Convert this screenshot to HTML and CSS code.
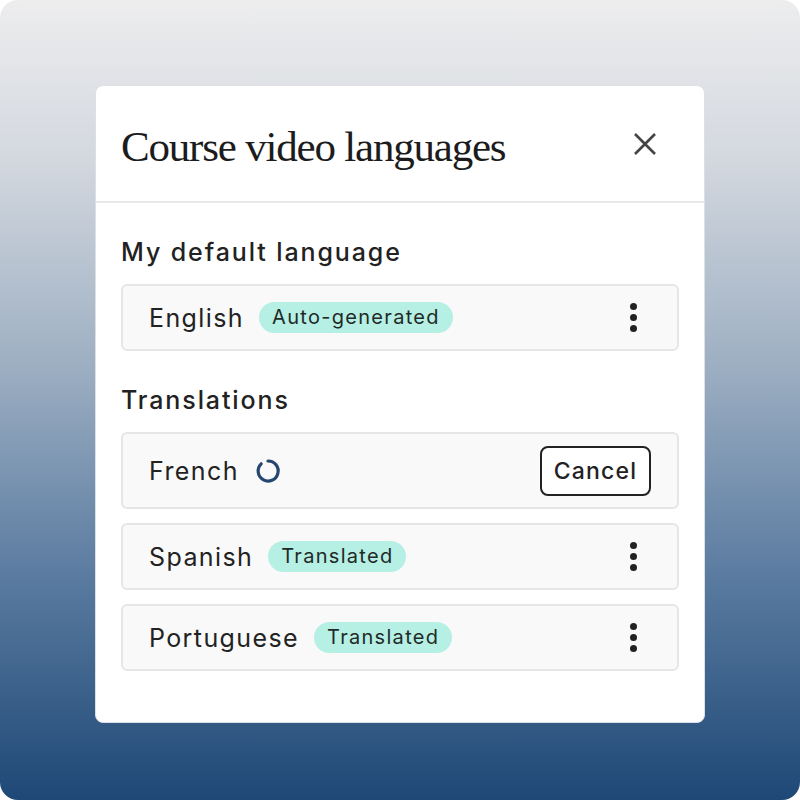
FILE: index.html
```html
<!DOCTYPE html>
<html>
<head>
    <meta charset="UTF-8" />
    <title>Course video languages</title>
    <link rel="stylesheet" href="styles.css">
</head>
<body>
<div class="stage">
    <div class="card">
        <div class="head">
            <h1>Course video languages</h1>
            <button class="close" aria-label="Close">
                <svg width="24" height="24" viewBox="0 0 24 24"><path d="M2 2 L22 22 M22 2 L2 22" stroke="#444" stroke-width="2.6" fill="none"/></svg>
            </button>
        </div>
        <div class="content">
            <h2>My default language</h2>
            <div class="row">
                <span class="lang">English</span>
                <span class="tag">Auto-generated</span>
                <span class="more"><i></i><i></i><i></i></span>
            </div>

            <h2 class="second">Translations</h2>
            <div class="row tall">
                <span class="lang">French</span>
                <svg class="spin" width="28" height="28" viewBox="0 0 28 28"><path d="M7.2 6.8 A10 10 0 1 0 14 4" stroke="#24466f" stroke-width="3.2" fill="none" stroke-linecap="round"/></svg>
                <button class="cancel">Cancel</button>
            </div>
            <div class="row">
                <span class="lang">Spanish</span>
                <span class="tag">Translated</span>
                <span class="more"><i></i><i></i><i></i></span>
            </div>
            <div class="row">
                <span class="lang">Portuguese</span>
                <span class="tag">Translated</span>
                <span class="more"><i></i><i></i><i></i></span>
            </div>
        </div>
    </div>
</div>
</body>
</html>
```

FILE: styles.css
```css
body {
    margin: 0;
    background: #fff;
}

.stage {
    width: 800px;
    height: 800px;
    box-sizing: border-box;
    border-radius: 18px;
    padding: 85px 95px 0 95px;
    background: linear-gradient(180deg, #ededee 0%, #d3d8df 20%, #9fb0c3 45%, #5f7fa3 70%, #1e4876 100%);
}

.card {
    width: 610px;
    height: 638px;
    box-sizing: border-box;
    background: #fff;
    border: 1px solid #dcdfe3;
    border-radius: 8px;
}

.head {
    height: 117px;
    box-sizing: border-box;
    display: flex;
    align-items: center;
    justify-content: space-between;
    padding: 0 47px 0 25px;
    border-bottom: 2px solid #e8e8e8;
}

h1 {
    margin: 5px 0 0 0;
    font-family: "Liberation Serif", serif;
    font-weight: 400;
    font-size: 43px;
    letter-spacing: -1.2px;
    color: #1c1c1c;
}

.close {
    background: none;
    border: none;
    padding: 0;
    width: 24px;
    height: 24px;
}

.content {
    padding: 34px 25px 0 25px;
    font-family: Inter, "Open Sans", sans-serif;
    color: #222;
}

h2 {
    margin: 0 0 17px 0;
    font-size: 25px;
    font-weight: 500;
    line-height: 30px;
    letter-spacing: 1.9px;
    color: #222;
}

h2.second {
    margin-top: 34px;
}

.row {
    height: 67px;
    box-sizing: border-box;
    display: flex;
    align-items: center;
    padding: 0 40px 0 26px;
    background: #f9f9f9;
    border: 2px solid #e6e6e6;
    border-radius: 6px;
    margin-bottom: 14px;
}

.row.tall {
    height: 77px;
    padding-right: 26px;
}

.lang {
    font-size: 25px;
    letter-spacing: 1.4px;
    color: #222;
}

.tag {
    margin-left: 15px;
    padding: 0 13px;
    height: 31px;
    line-height: 31px;
    border-radius: 16px;
    background: #b6efe3;
    font-size: 20px;
    letter-spacing: 1.3px;
    color: #1f2a28;
}

.more {
    margin-left: auto;
    display: flex;
    flex-direction: column;
    gap: 4px;
}

.more i {
    display: block;
    width: 7px;
    height: 7px;
    border-radius: 50%;
    background: #222;
}

.spin {
    margin-left: 15px;
}

.cancel {
    margin-left: auto;
    width: 111px;
    height: 50px;
    background: #fff;
    border: 2px solid #222;
    border-radius: 8px;
    font-family: Inter, "Open Sans", sans-serif;
    font-size: 23px;
    font-weight: 500;
    letter-spacing: 1.2px;
    color: #222;
}
```
